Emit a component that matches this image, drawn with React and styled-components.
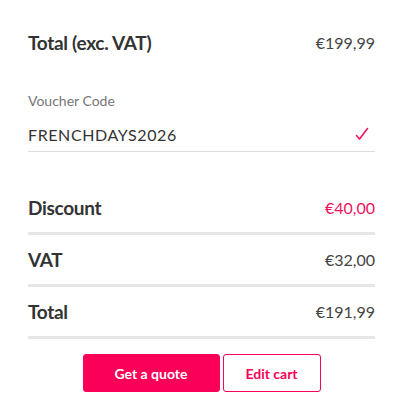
import React from 'react'
import styled, { createGlobalStyle } from 'styled-components'

const GlobalStyle = createGlobalStyle`
  html, body {
    margin: 0;
    padding: 0;
    background: #fff;
  }
  body {
    font-family: Lato, "Open Sans", Arial, sans-serif;
    color: #333;
  }
`

const Cart = styled.div`
  width: 347px;
  padding: 16px 0 0 28px;
`

const TopRow = styled.div`
  display: flex;
  justify-content: space-between;
  align-items: center;
  height: 52px;
`

const Title = styled.span`
  font-size: 19px;
  font-weight: 700;
  color: #333;
  letter-spacing: -0.3px;
`

const Amount = styled.span`
  font-size: 16px;
  color: ${({ accent }) => (accent ? '#f2125c' : '#444')};
`

const Voucher = styled.div`
  margin-top: 23px;
`

const VoucherLabel = styled.div`
  font-size: 14px;
  line-height: 20px;
  color: #777;
`

const VoucherInput = styled.div`
  display: flex;
  justify-content: space-between;
  align-items: center;
  height: 24px;
  margin-top: 11px;
  padding: 0 6px 5px 0;
  border-bottom: 1px solid #ddd;
  font-size: 16px;
  letter-spacing: 0.6px;
  color: #333;
`

const Summary = styled.ul`
  list-style: none;
  margin: 31px 0 0;
  padding: 0;
  li {
    display: flex;
    justify-content: space-between;
    align-items: center;
    height: 49px;
    border-bottom: 3px solid #e6e6e6;
  }
`

const Actions = styled.div`
  display: flex;
  justify-content: center;
  gap: 3px;
  margin-top: 15px;
`

const Button = styled.button`
  width: ${({ w }) => w}px;
  height: 38px;
  border-radius: 3px;
  border: 1px solid #fb0058;
  background: ${({ outline }) => (outline ? '#fff' : '#fb0058')};
  color: ${({ outline }) => (outline ? '#fb0058' : '#fff')};
  font-family: Lato, "Open Sans", Arial, sans-serif;
  font-size: 14px;
  font-weight: 700;
  cursor: pointer;
`

function Check() {
  return (
    <svg width="14" height="14" viewBox="0 0 14 14">
      <polyline points="1.5,8.5 4.5,12 12.5,1.5" fill="none" stroke="#f2125c" strokeWidth="1.6" strokeLinecap="round" strokeLinejoin="round" />
    </svg>
  )
}

export default function App() {
  const rows = [
    { label: 'Discount', value: '€40,00', accent: true },
    { label: 'VAT', value: '€32,00' },
    { label: 'Total', value: '€191,99' },
  ]
  return (
    <>
      <GlobalStyle />
      <Cart>
        <TopRow>
          <Title>Total (exc. VAT)</Title>
          <Amount>€199,99</Amount>
        </TopRow>
        <Voucher>
          <VoucherLabel>Voucher Code</VoucherLabel>
          <VoucherInput>
            <span>FRENCHDAYS2026</span>
            <Check />
          </VoucherInput>
        </Voucher>
        <Summary>
          {rows.map((item, index) => (
            <li key={index}>
              <Title>{item.label}</Title>
              <Amount accent={item.accent}>{item.value}</Amount>
            </li>
          ))}
        </Summary>
        <Actions>
          <Button w={137}>Get a quote</Button>
          <Button w={98} outline>Edit cart</Button>
        </Actions>
      </Cart>
    </>
  )
}
